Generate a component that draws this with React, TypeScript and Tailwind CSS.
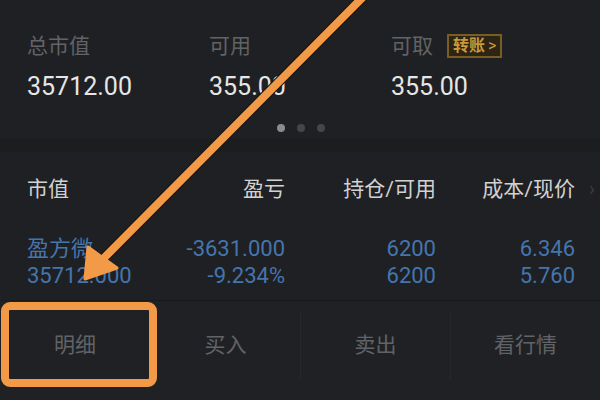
import React from "react";

export default function App() {
  const font = "font-['Roboto','Noto_Sans_CJK_SC',sans-serif]";
  return (
    <div className={`relative w-[600px] h-[400px] overflow-hidden bg-[#1f2023] ${font}`}>
      {/* account summary */}
      <div className="h-[138px] px-[27px] pt-[33px]">
        <div className="grid grid-cols-[182px_182px_1fr]">
          <div>
            <div className="text-[21px] leading-[26px] text-[#616367]">总市值</div>
            <div className="mt-[14px] text-[25px] leading-[28px] text-[#e6e6e6]">35712.00</div>
          </div>
          <div>
            <div className="text-[21px] leading-[26px] text-[#616367]">可用</div>
            <div className="mt-[14px] text-[25px] leading-[28px] text-[#e6e6e6]">355.00</div>
          </div>
          <div>
            <div className="flex items-center gap-[14px]">
              <span className="text-[21px] leading-[26px] text-[#616367]">可取</span>
              <span className="flex h-[24px] items-center border-2 border-[#7a5d22] bg-[#2c2415] px-[4px] text-[16px] font-bold leading-none text-[#c89a3a]">
                转账<span className="ml-[3px] font-normal">&gt;</span>
              </span>
            </div>
            <div className="mt-[14px] text-[25px] leading-[28px] text-[#e6e6e6]">355.00</div>
          </div>
        </div>
        <div className="mt-[23px] flex justify-center gap-[12px] pl-[2px]">
          <span className="h-[8px] w-[8px] rounded-full bg-[#8a8b8e]" />
          <span className="h-[8px] w-[8px] rounded-full bg-[#45464a]" />
          <span className="h-[8px] w-[8px] rounded-full bg-[#45464a]" />
        </div>
      </div>
      <div className="h-[14px] bg-[#1c1d1f]" />

      {/* holdings table */}
      <div className="h-[148px] pl-[27px] pr-[25px] pt-[22px]">
        <div className="grid grid-cols-[100px_158px_151px_139px] text-[21px] leading-[30px] text-[#d2d2d2]">
          <div>市值</div>
          <div className="text-right">盈亏</div>
          <div className="text-right">持仓/可用</div>
          <div className="relative text-right">
            成本/现价
            <span className="absolute right-[-20px] top-0 text-[#3a3b3e]">›</span>
          </div>
        </div>
        <div className="mt-[31px] grid grid-cols-[100px_158px_151px_139px] text-[22px] leading-[27px] text-[#4575ad]">
          <div>盈方微</div>
          <div className="text-right">-3631.000</div>
          <div className="text-right">6200</div>
          <div className="text-right">6.346</div>
          <div className="whitespace-nowrap">35712.000</div>
          <div className="text-right">-9.234%</div>
          <div className="text-right">6200</div>
          <div className="text-right">5.760</div>
        </div>
      </div>

      {/* bottom actions */}
      <div className="grid h-[100px] grid-cols-4 border-t border-[#191a1c] bg-[#202124] pb-[20px] pt-[10px]">
        <div className="flex items-center justify-center text-[21px] text-[#616367]">明细</div>
        <div className="flex items-center justify-center border-l border-[#27282b] text-[21px] text-[#616367]">买入</div>
        <div className="flex items-center justify-center border-l border-[#27282b] text-[21px] text-[#616367]">卖出</div>
        <div className="flex items-center justify-center border-l border-[#27282b] text-[21px] text-[#616367]">看行情</div>
      </div>

      {/* annotation overlay */}
      <svg className="absolute left-0 top-0" width="600" height="400" viewBox="0 0 600 400">
        <line x1="368" y1="-8" x2="100" y2="262" stroke="#1a120a" strokeWidth="10" strokeLinecap="round" />
        <line x1="368" y1="-8" x2="100" y2="262" stroke="#f29a47" strokeWidth="8" strokeLinecap="round" />
        <polygon points="85,279 88,247 117,268" fill="#f29a47" stroke="#f29a47" strokeWidth="3" strokeLinejoin="round" />
        <rect x="5" y="306" width="148" height="77" rx="5" fill="none" stroke="#f29a47" strokeWidth="8" />
      </svg>
    </div>
  );
}
